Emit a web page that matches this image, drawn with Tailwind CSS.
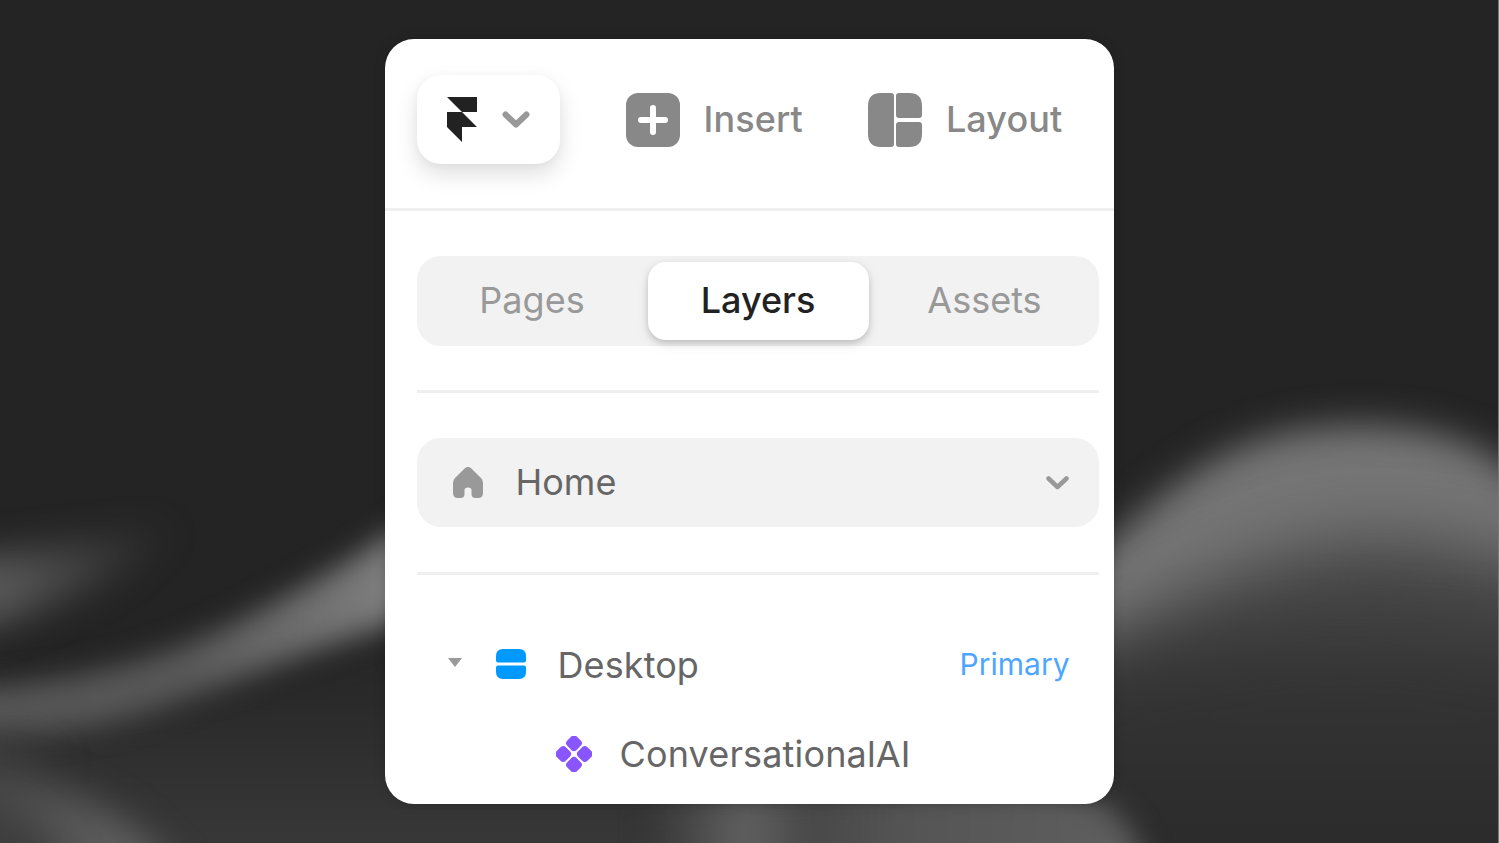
<!DOCTYPE html>
<html lang="en">
<head>
<meta charset="utf-8">
<title>Layers panel</title>
<script src="https://cdn.jsdelivr.net/npm/@tailwindcss/browser@4"></script>
</head>
<body class="bg-[#242424] font-['Inter',sans-serif]">
<main class="relative isolate flex h-[843px] w-full justify-center overflow-hidden border-r border-[#777] pt-[39px]">
  <!-- Blurred wave backdrop -->
  <svg class="absolute inset-0 -z-10 h-full w-full" viewBox="0 0 1498 843" preserveAspectRatio="none" color-interpolation-filters="sRGB" aria-hidden="true">
    <defs>
      <filter id="b12" x="-30%" y="-50%" width="160%" height="200%"><feGaussianBlur stdDeviation="14"/></filter>
      <filter id="b16" x="-30%" y="-50%" width="160%" height="200%"><feGaussianBlur stdDeviation="18"/></filter>
      <filter id="b30" x="-30%" y="-50%" width="160%" height="200%"><feGaussianBlur stdDeviation="34"/></filter>
      <linearGradient id="streak" gradientUnits="userSpaceOnUse" x1="0" y1="0" x2="400" y2="0"><stop offset="0" stop-color="#555"/><stop offset=".45" stop-color="#585858"/><stop offset="1" stop-color="#808080"/></linearGradient>
      <linearGradient id="blob" gradientUnits="userSpaceOnUse" x1="0" y1="0" x2="180" y2="0"><stop offset="0" stop-color="#585858"/><stop offset="1" stop-color="#585858" stop-opacity="0"/></linearGradient>
      <linearGradient id="floor" gradientUnits="userSpaceOnUse" x1="0" y1="680" x2="0" y2="843"><stop offset="0" stop-color="#282828"/><stop offset="1" stop-color="#383838"/></linearGradient>
      <linearGradient id="deep" gradientUnits="userSpaceOnUse" x1="0" y1="640" x2="0" y2="843"><stop offset="0" stop-color="#363636"/><stop offset="1" stop-color="#2b2b2b"/></linearGradient>
      <linearGradient id="ridge" gradientUnits="userSpaceOnUse" x1="0" y1="0" x2="150" y2="0"><stop offset="0" stop-color="#4a4a4a"/><stop offset="1" stop-color="#646464"/></linearGradient>
      <linearGradient id="strip" gradientUnits="userSpaceOnUse" x1="650" y1="0" x2="1180" y2="0"><stop offset="0" stop-color="#363636"/><stop offset=".18" stop-color="#606060"/><stop offset=".3" stop-color="#484848"/><stop offset=".5" stop-color="#555"/><stop offset="1" stop-color="#616161"/></linearGradient>
    </defs>
    <rect width="1498" height="843" fill="#242424"/>
    <path d="M-80 720C120 720 260 670 420 630L1100 680V930H-80Z" fill="url(#floor)" filter="url(#b16)"/>
    <path d="M-80 560C20 556 90 540 180 526C130 570 70 612 -80 644Z" fill="url(#blob)" filter="url(#b16)"/>
    <path d="M-80 688C110 688 210 638 290 594C340 568 380 543 450 492V608C330 638 220 690 130 718C60 738 0 738 -80 740Z" fill="url(#streak)" filter="url(#b12)"/>
    <path d="M-80 740C-20 740 20 745 60 765L-80 790Z" fill="#3e3e3e" filter="url(#b16)"/>
    <path d="M-80 764C40 768 110 795 180 875L-80 900Z" fill="url(#ridge)" filter="url(#b16)"/>
    <path d="M-80 795C0 795 40 815 80 890L-80 920Z" fill="#3e3e3e" filter="url(#b16)"/>
    <path d="M1020 630C1110 542 1190 450 1290 432C1360 418 1450 425 1498 461C1530 485 1560 510 1600 550V960H1020Z" fill="#757575" filter="url(#b16)"/>
    <path d="M1020 700C1110 640 1200 572 1330 545C1420 532 1500 556 1640 600V990H1020Z" fill="#444" filter="url(#b30)"/>
    <path d="M1020 690C1110 655 1200 640 1330 635C1420 635 1500 645 1640 665V1000H1020Z" fill="url(#deep)" filter="url(#b30)"/>
    <path d="M650 798C850 788 1050 778 1095 798C1125 815 1150 850 1160 920H650Z" fill="url(#strip)" filter="url(#b12)"/>
  </svg>

  <section class="h-[764.5px] w-[729px] shrink-0 overflow-hidden rounded-[29px] bg-white shadow-[0_0_12px_rgba(0,0,0,0.2)]">
    <header class="flex h-[172px] items-start border-b-[3px] border-[#efefef] pt-[35px] pl-8">
      <button class="mt-px flex h-[89px] w-[143px] items-center rounded-[24px] bg-white pl-[30px] shadow-[0_10px_22px_rgba(0,0,0,0.13),0_1px_8px_rgba(0,0,0,0.03)]">
        <svg class="h-[45px] w-[30px]" viewBox="0 0 30 45" fill="#222"><path d="M0 0H30V15H15ZM0 15H15L30 30H15V45L0 30Z"/></svg>
        <svg class="ml-[25px] h-[17px] w-7" viewBox="0 0 28 17" fill="none" stroke="#999" stroke-width="6" stroke-linecap="round" stroke-linejoin="round"><path d="M3.5 3.5L14 13.5L24.5 3.5"/></svg>
      </button>
      <button class="ml-[66px] flex h-[90px] items-center text-[36px] font-medium text-[#888]">
        <svg class="mt-px h-[54px] w-[54px]" viewBox="0 0 54 54"><rect width="54" height="54" rx="12" fill="#888"/><path d="M27 15V39M15 27H39" stroke="#fff" stroke-width="6" stroke-linecap="round"/></svg>
        <span class="ml-[24px] tracking-[0.1px]">Insert</span>
      </button>
      <button class="ml-[65px] flex h-[90px] items-center text-[36px] font-medium text-[#888]">
        <svg class="mt-px h-[54px] w-[54px]" viewBox="0 0 54 54" fill="#888"><path d="M13 0H23Q26 0 26 3V51Q26 54 23 54H13Q0 54 0 41V13Q0 0 13 0ZM31 0H41Q54 0 54 13V22Q54 25 51 25H31Q28 25 28 22V3Q28 0 31 0ZM31 29H51Q54 29 54 32V41Q54 54 41 54H31Q28 54 28 51V32Q28 29 31 29Z"/></svg>
        <span class="ml-[24px] tracking-[0.1px]">Layout</span>
      </button>
    </header>

    <div class="pt-[45px] pr-[15px] pl-8">
      <nav class="flex h-[90px] rounded-[24px] bg-[#f2f2f2] p-[6px] text-[36px] text-[#999]">
        <button class="w-[225px] pr-[6px] pb-[2px]">Pages</button>
        <button class="w-[221px] rounded-[18px] bg-white pb-[2px] font-medium text-[#222] shadow-[0_3px_6px_rgba(0,0,0,0.16),0_4px_14px_rgba(0,0,0,0.08)]">Layers</button>
        <button class="flex-1 pb-[2px] pl-[8px]">Assets</button>
      </nav>
      <hr class="mt-[44px] border-t-[3px] border-[#efefef]">
      <button class="mt-[45px] flex h-[89px] w-full items-center rounded-[24px] bg-[#f2f2f2] pr-[30px] pl-[36px] text-[36px] text-[#666]">
        <svg class="h-[31px] w-[30px]" viewBox="0 0 30 31" fill="#999"><path d="M11.6 1.4Q15 -1.2 18.4 1.4L28 11Q30 13.2 30 16V26Q30 31 25 31H22.5Q18.5 31 18.5 27V23Q18.5 20.5 15 20.5Q11.5 20.5 11.5 23V27Q11.5 31 7.500 31H5Q0 31 0 26V16Q0 13.200 2 11Z"/></svg>
        <span class="ml-[33px] pb-[2px]">Home</span>
        <svg class="mt-[1px] ml-auto h-[14px] w-[23px]" viewBox="0 0 23 14" fill="none" stroke="#999" stroke-width="4.500" stroke-linecap="round" stroke-linejoin="round"><path d="M2.500 2.500L11.500 11L20.500 2.500"/></svg>
      </button>
      <hr class="mt-[45px] border-t-[3px] border-[#efefef]">
      <ul class="pt-[44px] text-[36px] text-[#666]">
        <li class="flex h-[90px] items-center pr-[29px] pl-[31px]">
          <svg class="-mt-[4px] h-[9px] w-[14px]" viewBox="0 0 14 9" fill="#999"><path d="M0 0H14L7 9Z"/></svg>
          <svg class="ml-[34px] h-[30px] w-[30px]" viewBox="0 0 30 30" fill="#09f"><path d="M7 0H23Q30 0 30 7V11.500Q30 13.500 28 13.500H2Q0 13.500 0 11.500V7Q0 0 7 0ZM2 16.500H28Q30 16.500 30 18.500V23Q30 30 23 30H7Q0 30 0 23V18.500Q0 16.500 2 16.500Z"/></svg>
          <span class="ml-[32px] pt-[1px] tracking-[0.1px]">Desktop</span>
          <span class="ml-auto text-[30px] text-[#4da6ff]">Primary</span>
        </li>
        <li class="flex h-[90px] items-center pl-[139px]">
          <svg class="-mt-px h-9 w-9" viewBox="-18 -18 36 36" fill="#85f"><g transform="rotate(45)"><rect x="-14.300" y="-14.300" width="13.300" height="13.300" rx="3.800"/><rect x="1" y="-14.300" width="13.300" height="13.300" rx="3.800"/><rect x="-14.300" y="1" width="13.300" height="13.300" rx="3.800"/><rect x="1" y="1" width="13.300" height="13.300" rx="3.800"/></g></svg>
          <span class="ml-[28px] tracking-[0.15px]">ConversationalAI</span>
        </li>
      </ul>
    </div>
  </section>
</main>
</body>
</html>
